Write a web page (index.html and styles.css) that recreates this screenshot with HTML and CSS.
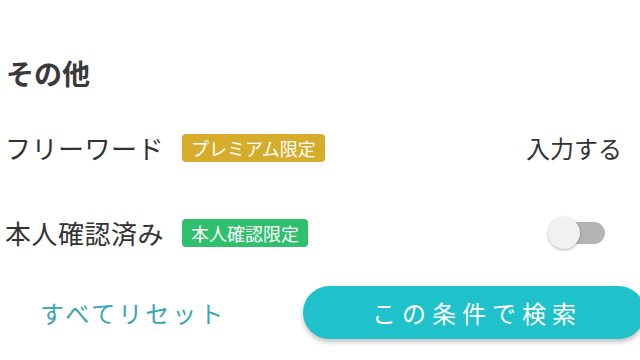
FILE: index.html
```html
<!DOCTYPE html>
<html lang="ja">
<head>
<meta charset="utf-8">
<link rel="stylesheet" href="styles.css">
</head>
<body>
<div class="page">
  <h2 class="heading">その他</h2>
  <div class="row">
    <div class="left">
      <span class="label">フリーワード</span>
      <span class="badge badge-premium">プレミアム限定</span>
    </div>
    <span class="action">入力する</span>
  </div>
  <div class="row">
    <div class="left">
      <span class="label">本人確認済み</span>
      <span class="badge badge-verified">本人確認限定</span>
    </div>
    <span class="toggle"><span class="track"></span><span class="thumb"></span></span>
  </div>
  <div class="bottom">
    <span class="reset">すべてリセット</span>
    <button class="search">この条件で検索</button>
  </div>
</div>
</body>
</html>
```
FILE: styles.css
```css
html, body {
  margin: 0;
  padding: 0;
  background: #ffffff;
  overflow: hidden;
  width: 640px;
  height: 360px;
}
.page {
  font-family: "Noto Sans CJK JP", "Noto Sans", sans-serif;
  color: #333333;
  padding-top: 55px;
}
.heading {
  margin: 0 0 14px 0;
  padding-left: 6px;
  font-size: 28px;
  line-height: 36px;
  font-weight: 700;
  color: #3a3a3a;
}
.row {
  height: 85px;
  display: flex;
  align-items: center;
  justify-content: space-between;
  padding: 0 18px 0 5px;
}
.left {
  display: flex;
  align-items: center;
  gap: 18px;
}
.label {
  font-size: 26px;
  letter-spacing: 0.5px;
  line-height: 36px;
  color: #333333;
}
.badge {
  display: inline-flex;
  align-items: center;
  height: 28px;
  padding: 0 9px;
  border-radius: 4px;
  font-size: 18px;
  color: #ffffff;
  line-height: 28px;
}
.badge-premium { background: #d5ac2c; }
.badge-verified { background: #2fbf6d; }
.action {
  font-size: 24px;
  color: #333333;
}
.toggle {
  position: relative;
  width: 57px;
  height: 32px;
  margin-right: 17px;
}
.track {
  position: absolute;
  left: 7px;
  top: 5px;
  width: 50px;
  height: 22px;
  border-radius: 11px;
  background: #b4b4b4;
}
.thumb {
  position: absolute;
  left: 0;
  top: 0;
  width: 32px;
  height: 32px;
  border-radius: 50%;
  background: #f1f1f1;
  box-shadow: 0 1px 3px rgba(0, 0, 0, 0.3);
}
.bottom {
  margin-top: 10px;
  display: flex;
  align-items: center;
  height: 54px;
}
.reset {
  flex: none;
  width: 263px;
  padding-left: 40px;
  font-size: 24px;
  letter-spacing: 3px;
  color: #38a6b4;
}
.search {
  flex: none;
  width: 342px;
  height: 53px;
  border: none;
  border-radius: 27px;
  background: #1fc1ca;
  color: #ffffff;
  font-family: "Noto Sans CJK JP", "Noto Sans", sans-serif;
  font-size: 24px;
  letter-spacing: 6px;
  padding: 0 0 0 6px;
  box-shadow: 0 3px 5px rgba(0, 0, 0, 0.25);
}
```
